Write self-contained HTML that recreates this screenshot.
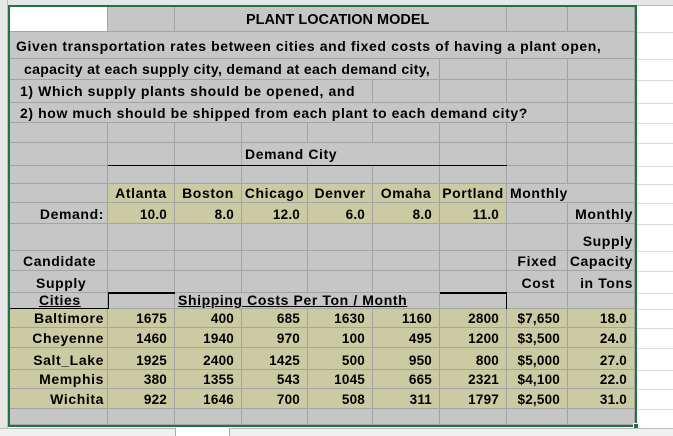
<!DOCTYPE html>
<html><head><meta charset="utf-8"><style>
*{margin:0;padding:0;box-sizing:border-box}
body{width:673px;height:436px;overflow:hidden;background:#fff;position:relative;font-family:"Liberation Sans",Arial,sans-serif;font-weight:bold;font-size:14px;letter-spacing:0.6px;color:#000}
.c{position:absolute;border-right:1px solid #a4a4a4;border-bottom:1px solid #a4a4a4;background:#c6c6c6;white-space:nowrap;display:flex;align-items:flex-end;padding-bottom:1px;line-height:15px}
.o{background:#cbcba3}
.r{justify-content:flex-end;padding-right:7px}
.m{justify-content:center}
.n{font-size:13.5px;letter-spacing:0.2px}
.u{text-decoration:underline}
.bl{position:absolute;background:#000}
.g{position:absolute;background:#dadada}
</style></head><body>
<div style="position:absolute;left:0;top:0;width:673px;height:6px;background:#e6e6e6;border-bottom:1px solid #bdbdbd"></div>
<div style="position:absolute;left:0;top:0;width:8px;height:436px;background:#e6e6e6;border-right:1px solid #bdbdbd"></div>
<div class="g" style="left:637px;top:32px;width:36px;height:1px"></div>
<div class="g" style="left:637px;top:59px;width:36px;height:1px"></div>
<div class="g" style="left:637px;top:80px;width:36px;height:1px"></div>
<div class="g" style="left:637px;top:103px;width:36px;height:1px"></div>
<div class="g" style="left:637px;top:123px;width:36px;height:1px"></div>
<div class="g" style="left:637px;top:143px;width:36px;height:1px"></div>
<div class="g" style="left:637px;top:166px;width:36px;height:1px"></div>
<div class="g" style="left:637px;top:184px;width:36px;height:1px"></div>
<div class="g" style="left:637px;top:203px;width:36px;height:1px"></div>
<div class="g" style="left:637px;top:224px;width:36px;height:1px"></div>
<div class="g" style="left:637px;top:251px;width:36px;height:1px"></div>
<div class="g" style="left:637px;top:271px;width:36px;height:1px"></div>
<div class="g" style="left:637px;top:293px;width:36px;height:1px"></div>
<div class="g" style="left:637px;top:309px;width:36px;height:1px"></div>
<div class="g" style="left:637px;top:328px;width:36px;height:1px"></div>
<div class="g" style="left:637px;top:348px;width:36px;height:1px"></div>
<div class="g" style="left:637px;top:370px;width:36px;height:1px"></div>
<div class="g" style="left:637px;top:389px;width:36px;height:1px"></div>
<div class="g" style="left:637px;top:409px;width:36px;height:1px"></div>

<!-- r1 -->
<div class="c" style="left:10px;top:6px;width:98px;height:26px;background:#fff"></div>
<div class="c" style="left:108px;top:6px;width:67px;height:26px"></div>
<div class="c" style="left:175px;top:6px;width:332px;height:26px;padding-left:71px;font-size:14.5px;letter-spacing:0;padding-bottom:3px">PLANT LOCATION MODEL</div>
<div class="c" style="left:507px;top:6px;width:61px;height:26px"></div>
<div class="c" style="left:568px;top:6px;width:67px;height:26px"></div>
<!-- r2 -->
<div class="c" style="left:10px;top:32px;width:625px;height:27px;padding-left:6px;padding-bottom:4px">Given transportation rates between cities and fixed costs of having a plant open,</div>
<!-- r3 -->
<div class="c" style="left:10px;top:59px;width:430px;height:21px;padding-left:14px;padding-bottom:2px;letter-spacing:0.35px">capacity at each supply city, demand at each demand city,</div>
<div class="c" style="left:440px;top:59px;width:67px;height:21px"></div>
<div class="c" style="left:507px;top:59px;width:61px;height:21px"></div>
<div class="c" style="left:568px;top:59px;width:67px;height:21px"></div>
<!-- r4 -->
<div class="c" style="left:10px;top:80px;width:363px;height:23px;padding-left:10px;padding-bottom:3px">1) Which supply plants should be opened, and</div>
<div class="c" style="left:373px;top:80px;width:67px;height:23px"></div>
<div class="c" style="left:440px;top:80px;width:67px;height:23px"></div>
<div class="c" style="left:507px;top:80px;width:61px;height:23px"></div>
<div class="c" style="left:568px;top:80px;width:67px;height:23px"></div>
<!-- r5 -->
<div class="c" style="left:10px;top:103px;width:558px;height:20px;padding-left:10px">2) how much should be shipped from each plant to each demand city?</div>
<div class="c" style="left:568px;top:103px;width:67px;height:20px"></div>
<!-- r6 -->
<div class="c" style="left:10px;top:123px;width:98px;height:20px"></div>
<div class="c" style="left:108px;top:123px;width:67px;height:20px"></div>
<div class="c" style="left:175px;top:123px;width:67px;height:20px"></div>
<div class="c" style="left:242px;top:123px;width:66px;height:20px"></div>
<div class="c" style="left:308px;top:123px;width:65px;height:20px"></div>
<div class="c" style="left:373px;top:123px;width:67px;height:20px"></div>
<div class="c" style="left:440px;top:123px;width:67px;height:20px"></div>
<div class="c" style="left:507px;top:123px;width:61px;height:20px"></div>
<div class="c" style="left:568px;top:123px;width:67px;height:20px"></div>
<!-- r7 -->
<div class="c" style="left:10px;top:143px;width:98px;height:23px"></div>
<div class="c" style="left:108px;top:143px;width:67px;height:23px"></div>
<div class="c" style="left:175px;top:143px;width:67px;height:23px"></div>
<div class="c" style="left:242px;top:143px;width:198px;height:23px;padding-left:3px;padding-bottom:3px">Demand City</div>
<div class="c" style="left:440px;top:143px;width:67px;height:23px"></div>
<div class="c" style="left:507px;top:143px;width:61px;height:23px"></div>
<div class="c" style="left:568px;top:143px;width:67px;height:23px"></div>
<div class="bl" style="left:108px;top:165px;width:399px;height:2px"></div>
<!-- r8 -->
<div class="c" style="left:10px;top:166px;width:98px;height:18px"></div>
<div class="c" style="left:108px;top:166px;width:67px;height:18px"></div>
<div class="c" style="left:175px;top:166px;width:67px;height:18px"></div>
<div class="c" style="left:242px;top:166px;width:66px;height:18px"></div>
<div class="c" style="left:308px;top:166px;width:65px;height:18px"></div>
<div class="c" style="left:373px;top:166px;width:67px;height:18px"></div>
<div class="c" style="left:440px;top:166px;width:67px;height:18px"></div>
<div class="c" style="left:507px;top:166px;width:61px;height:18px"></div>
<div class="c" style="left:568px;top:166px;width:67px;height:18px"></div>
<!-- r9 -->
<div class="c" style="left:10px;top:184px;width:98px;height:19px"></div>
<div class="c o m" style="left:108px;top:184px;width:67px;height:19px">Atlanta</div>
<div class="c o m" style="left:175px;top:184px;width:67px;height:19px">Boston</div>
<div class="c o m" style="left:242px;top:184px;width:66px;height:19px">Chicago</div>
<div class="c o m" style="left:308px;top:184px;width:65px;height:19px">Denver</div>
<div class="c o m" style="left:373px;top:184px;width:67px;height:19px">Omaha</div>
<div class="c o m" style="left:440px;top:184px;width:67px;height:19px">Portland</div>
<div class="c" style="left:568px;top:184px;width:67px;height:19px"></div>
<div class="c" style="left:507px;top:184px;width:61px;height:19px;padding-left:3px;border-right:none">Monthly</div>
<!-- r10 -->
<div class="c r" style="left:10px;top:203px;width:98px;height:21px;padding-right:3px">Demand:</div>
<div class="c o r n" style="left:108px;top:203px;width:67px;height:21px">10.0</div>
<div class="c o r n" style="left:175px;top:203px;width:67px;height:21px">8.0</div>
<div class="c o r n" style="left:242px;top:203px;width:66px;height:21px">12.0</div>
<div class="c o r n" style="left:308px;top:203px;width:65px;height:21px">6.0</div>
<div class="c o r n" style="left:373px;top:203px;width:67px;height:21px">8.0</div>
<div class="c o r n" style="left:440px;top:203px;width:67px;height:21px">11.0</div>
<div class="c" style="left:507px;top:203px;width:61px;height:21px"></div>
<div class="c r" style="left:568px;top:203px;width:67px;height:21px;padding-right:1px">Monthly</div>
<!-- r11 -->
<div class="c" style="left:10px;top:224px;width:98px;height:27px"></div>
<div class="c" style="left:108px;top:224px;width:67px;height:27px"></div>
<div class="c" style="left:175px;top:224px;width:67px;height:27px"></div>
<div class="c" style="left:242px;top:224px;width:66px;height:27px"></div>
<div class="c" style="left:308px;top:224px;width:65px;height:27px"></div>
<div class="c" style="left:373px;top:224px;width:67px;height:27px"></div>
<div class="c" style="left:440px;top:224px;width:67px;height:27px"></div>
<div class="c" style="left:507px;top:224px;width:61px;height:27px"></div>
<div class="c r" style="left:568px;top:224px;width:67px;height:27px;padding-right:1px">Supply</div>
<!-- r12 -->
<div class="c" style="left:10px;top:251px;width:98px;height:20px;padding-left:13px">Candidate</div>
<div class="c" style="left:108px;top:251px;width:67px;height:20px"></div>
<div class="c" style="left:175px;top:251px;width:67px;height:20px"></div>
<div class="c" style="left:242px;top:251px;width:66px;height:20px"></div>
<div class="c" style="left:308px;top:251px;width:65px;height:20px"></div>
<div class="c" style="left:373px;top:251px;width:67px;height:20px"></div>
<div class="c" style="left:440px;top:251px;width:67px;height:20px"></div>
<div class="c r" style="left:507px;top:251px;width:61px;height:20px;padding-right:10px">Fixed</div>
<div class="c r" style="left:568px;top:251px;width:67px;height:20px;padding-right:1px">Capacity</div>
<!-- r13 -->
<div class="c" style="left:10px;top:271px;width:98px;height:22px;padding-left:26px">Supply</div>
<div class="c" style="left:108px;top:271px;width:67px;height:22px"></div>
<div class="c" style="left:175px;top:271px;width:67px;height:22px"></div>
<div class="c" style="left:242px;top:271px;width:66px;height:22px"></div>
<div class="c" style="left:308px;top:271px;width:65px;height:22px"></div>
<div class="c" style="left:373px;top:271px;width:67px;height:22px"></div>
<div class="c" style="left:440px;top:271px;width:67px;height:22px"></div>
<div class="c r" style="left:507px;top:271px;width:61px;height:22px;padding-right:12px">Cost</div>
<div class="c r" style="left:568px;top:271px;width:67px;height:22px;padding-right:1px">in Tons</div>
<!-- r14 -->
<div class="c" style="left:10px;top:293px;width:98px;height:16px;padding-left:29px;padding-bottom:0"><span class="u">Cities</span></div>
<div class="c" style="left:108px;top:293px;width:67px;height:16px"></div>
<div class="c" style="left:175px;top:293px;width:265px;height:16px;padding-left:3px;padding-bottom:0"><span class="u">Shipping Costs Per Ton / Month</span></div>
<div class="c" style="left:440px;top:293px;width:67px;height:16px"></div>
<div class="c" style="left:507px;top:293px;width:61px;height:16px"></div>
<div class="c" style="left:568px;top:293px;width:67px;height:16px"></div>
<div class="bl" style="left:10px;top:308px;width:98px;height:2px"></div>
<div class="bl" style="left:108px;top:292px;width:67px;height:2px"></div>
<div class="bl" style="left:108px;top:292px;width:1px;height:17px"></div>
<div class="bl" style="left:440px;top:292px;width:67px;height:2px"></div>
<div class="bl" style="left:506px;top:292px;width:1px;height:17px"></div>
<!-- data rows -->
<div class="c o r" style="left:10px;top:309px;width:98px;height:19px;padding-right:3px">Baltimore</div>
<div class="c o r n" style="left:108px;top:309px;width:67px;height:19px">1675</div>
<div class="c o r n" style="left:175px;top:309px;width:67px;height:19px">400</div>
<div class="c o r n" style="left:242px;top:309px;width:66px;height:19px">685</div>
<div class="c o r n" style="left:308px;top:309px;width:65px;height:19px">1630</div>
<div class="c o r n" style="left:373px;top:309px;width:67px;height:19px">1160</div>
<div class="c o r n" style="left:440px;top:309px;width:67px;height:19px">2800</div>
<div class="c o r n" style="left:507px;top:309px;width:61px;height:19px">$7,650</div>
<div class="c o r n" style="left:568px;top:309px;width:67px;height:19px">18.0</div>

<div class="c o r" style="left:10px;top:328px;width:98px;height:20px;padding-right:3px">Cheyenne</div>
<div class="c o r n" style="left:108px;top:328px;width:67px;height:20px">1460</div>
<div class="c o r n" style="left:175px;top:328px;width:67px;height:20px">1940</div>
<div class="c o r n" style="left:242px;top:328px;width:66px;height:20px">970</div>
<div class="c o r n" style="left:308px;top:328px;width:65px;height:20px">100</div>
<div class="c o r n" style="left:373px;top:328px;width:67px;height:20px">495</div>
<div class="c o r n" style="left:440px;top:328px;width:67px;height:20px">1200</div>
<div class="c o r n" style="left:507px;top:328px;width:61px;height:20px">$3,500</div>
<div class="c o r n" style="left:568px;top:328px;width:67px;height:20px">24.0</div>

<div class="c o r" style="left:10px;top:348px;width:98px;height:22px;padding-right:3px">Salt_Lake</div>
<div class="c o r n" style="left:108px;top:348px;width:67px;height:22px">1925</div>
<div class="c o r n" style="left:175px;top:348px;width:67px;height:22px">2400</div>
<div class="c o r n" style="left:242px;top:348px;width:66px;height:22px">1425</div>
<div class="c o r n" style="left:308px;top:348px;width:65px;height:22px">500</div>
<div class="c o r n" style="left:373px;top:348px;width:67px;height:22px">950</div>
<div class="c o r n" style="left:440px;top:348px;width:67px;height:22px">800</div>
<div class="c o r n" style="left:507px;top:348px;width:61px;height:22px">$5,000</div>
<div class="c o r n" style="left:568px;top:348px;width:67px;height:22px">27.0</div>

<div class="c o r" style="left:10px;top:370px;width:98px;height:19px;padding-right:3px">Memphis</div>
<div class="c o r n" style="left:108px;top:370px;width:67px;height:19px">380</div>
<div class="c o r n" style="left:175px;top:370px;width:67px;height:19px">1355</div>
<div class="c o r n" style="left:242px;top:370px;width:66px;height:19px">543</div>
<div class="c o r n" style="left:308px;top:370px;width:65px;height:19px">1045</div>
<div class="c o r n" style="left:373px;top:370px;width:67px;height:19px">665</div>
<div class="c o r n" style="left:440px;top:370px;width:67px;height:19px">2321</div>
<div class="c o r n" style="left:507px;top:370px;width:61px;height:19px">$4,100</div>
<div class="c o r n" style="left:568px;top:370px;width:67px;height:19px">22.0</div>

<div class="c o r" style="left:10px;top:389px;width:98px;height:20px;padding-right:3px">Wichita</div>
<div class="c o r n" style="left:108px;top:389px;width:67px;height:20px">922</div>
<div class="c o r n" style="left:175px;top:389px;width:67px;height:20px">1646</div>
<div class="c o r n" style="left:242px;top:389px;width:66px;height:20px">700</div>
<div class="c o r n" style="left:308px;top:389px;width:65px;height:20px">508</div>
<div class="c o r n" style="left:373px;top:389px;width:67px;height:20px">311</div>
<div class="c o r n" style="left:440px;top:389px;width:67px;height:20px">1797</div>
<div class="c o r n" style="left:507px;top:389px;width:61px;height:20px">$2,500</div>
<div class="c o r n" style="left:568px;top:389px;width:67px;height:20px">31.0</div>
<!-- r20 -->
<div class="c" style="left:10px;top:409px;width:98px;height:16px"></div>
<div class="c" style="left:108px;top:409px;width:67px;height:16px"></div>
<div class="c" style="left:175px;top:409px;width:67px;height:16px"></div>
<div class="c" style="left:242px;top:409px;width:66px;height:16px"></div>
<div class="c" style="left:308px;top:409px;width:65px;height:16px"></div>
<div class="c" style="left:373px;top:409px;width:67px;height:16px"></div>
<div class="c" style="left:440px;top:409px;width:67px;height:16px"></div>
<div class="c" style="left:507px;top:409px;width:61px;height:16px"></div>
<div class="c" style="left:568px;top:409px;width:67px;height:16px"></div>
<!-- selection border -->
<div style="position:absolute;left:8px;top:5px;width:629px;height:422px;border:2px solid #217346"></div>
<div style="position:absolute;left:633px;top:423px;width:6px;height:6px;background:#217346;border:1px solid #fff"></div>
<div style="position:absolute;left:0;top:428px;width:673px;height:8px;background:#f0f0f0;border-top:1px solid #bdbdbd"></div>
<div style="position:absolute;left:175px;top:428px;width:55px;height:8px;background:#fff;border-left:1px solid #aaa;border-right:1px solid #aaa"></div>
</body></html>
